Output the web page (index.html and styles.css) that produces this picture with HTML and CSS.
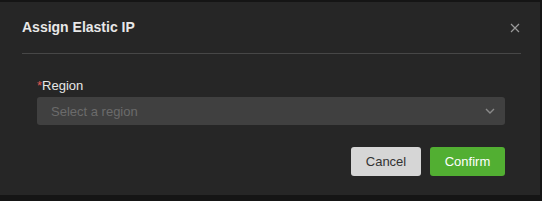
FILE: index.html
```html
<!DOCTYPE html>
<html lang="en">
   <head>
      <meta charset="UTF-8">
      <meta name="viewport" content="width=device-width, initial-scale=1.0">
      <title>Assign Elastic IP</title>
      <link rel="stylesheet" href="styles.css">
   </head>
   <body>
      <div class="dialog">
         <div class="dialog-header">
            <span class="dialog-title">Assign Elastic IP</span>
            <span class="dialog-close">
               <svg width="10" height="10" viewBox="0 0 10 10">
                  <path d="M1 1L9 9M9 1L1 9" />
               </svg>
            </span>
         </div>
         <div class="dialog-body">
            <label class="field-label"><span class="required">*</span>Region</label>
            <div class="select">
               <span class="select-placeholder">Select a region</span>
               <svg class="select-arrow" width="10" height="6" viewBox="0 0 10 6">
                  <path d="M1 1L5 5L9 1" />
               </svg>
            </div>
         </div>
         <div class="dialog-footer">
            <button class="btn btn-cancel">Cancel</button>
            <button class="btn btn-confirm">Confirm</button>
         </div>
      </div>
   </body>
</html>
```

FILE: styles.css
```css
html,
body {
    margin: 0;
    padding: 0;
    background: #151515;
    font-family: "Liberation Sans", Arial, sans-serif;
}
/* Dialog */
.dialog {
    margin-top: 2px;
    width: 540px;
    height: 193px;
    background: #262626;
    box-sizing: border-box;
}
.dialog-header {
    height: 52px;
    margin: 0 19px 0 22px;
    border-bottom: 1px solid #474747;
    display: flex;
    align-items: center;
    justify-content: space-between;
    box-sizing: border-box;
}
.dialog-title {
    color: #e8e8e8;
    font-size: 14px;
    font-weight: bold;
    margin-top: -1px;
}
.dialog-close {
    display: flex;
    margin-right: 1px;
    margin-top: 1px;
}
.dialog-close path {
    stroke: #9a9a9a;
    stroke-width: 1.2;
    fill: none;
}
.dialog-body {
    padding: 24px 35px 0 37px;
}
.field-label {
    display: block;
    color: #e6e6e6;
    font-size: 13px;
    line-height: 16px;
    margin-bottom: 3px;
}
.required {
    color: #e0574f;
}
.select {
    height: 28px;
    background: #404040;
    border-radius: 3px;
    display: flex;
    align-items: center;
    justify-content: space-between;
    padding: 0 10px 0 14px;
}
.select-placeholder {
    color: #6b6b6b;
    font-size: 13px;
}
.select-arrow path {
    stroke: #8a8a8a;
    stroke-width: 1.4;
    fill: none;
}
.dialog-footer {
    display: flex;
    justify-content: flex-end;
    gap: 9px;
    padding: 22px 35px 0 37px;
}
.btn {
    height: 29px;
    border: none;
    border-radius: 3px;
    font-family: "Liberation Sans", Arial, sans-serif;
    font-size: 13px;
    padding: 0;
}
.btn-cancel {
    width: 70px;
    background: #d6d6d6;
    color: #333;
}
.btn-confirm {
    width: 75px;
    background: #52af32;
    color: #fff;
}
```
